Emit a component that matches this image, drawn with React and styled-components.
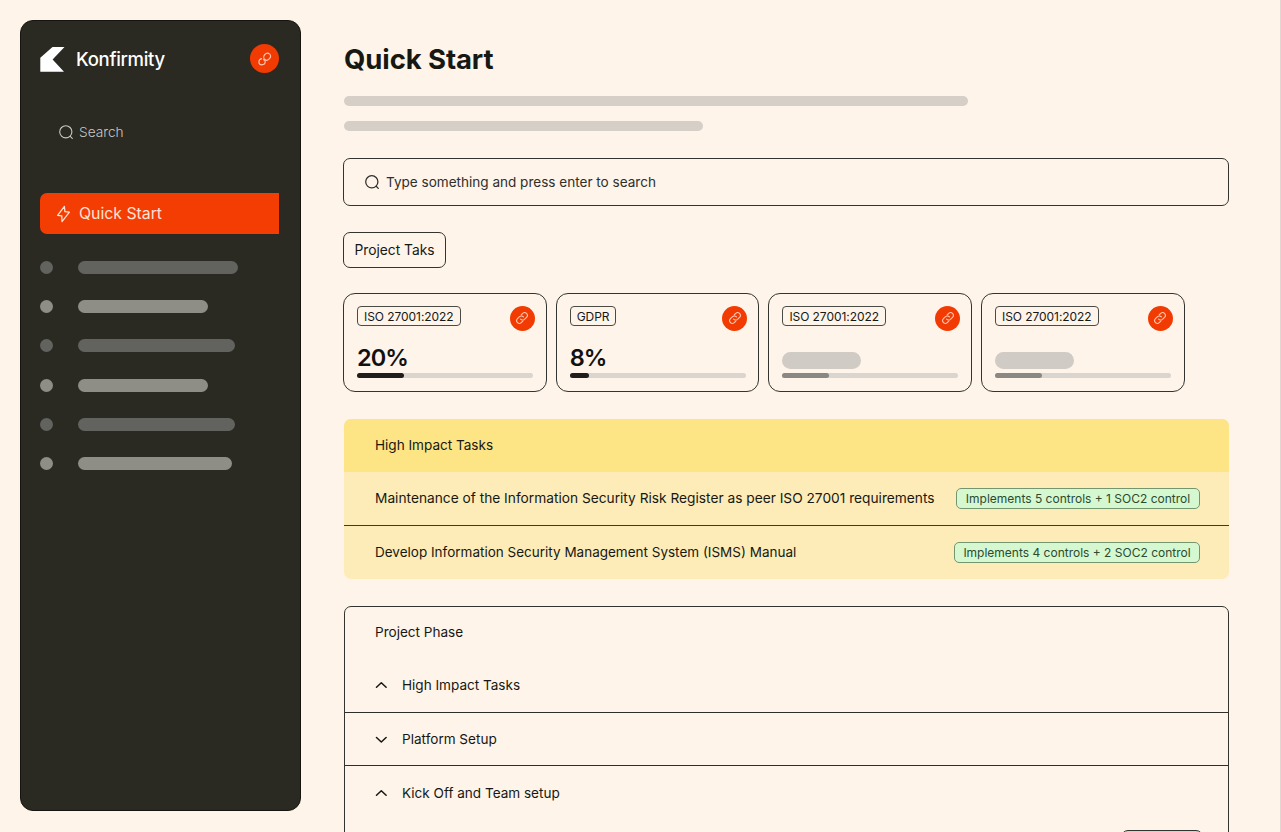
import React from 'react'
import styled, { createGlobalStyle } from 'styled-components'

const navItems = [
  { width: 160, dim: true },
  { width: 130 },
  { width: 157, dim: true },
  { width: 130 },
  { width: 157, dim: true },
  { width: 154 }
]

const projects = [
  { name: 'ISO 27001:2022', percent: '20%', done: 47 },
  { name: 'GDPR', percent: '8%', done: 19 },
  { name: 'ISO 27001:2022', done: 47 },
  { name: 'ISO 27001:2022', done: 47 }
]

const phases = [
  { name: 'High Impact Tasks', open: true },
  { name: 'Platform Setup' },
  { name: 'Kick Off and Team setup', open: true }
]

const SearchIcon = ({ size = 16, weight = 1.2 }) => (
  <svg width={size} height={size} viewBox='0 0 16 16' fill='none' stroke='currentColor' strokeWidth={weight} strokeLinecap='round'>
    <circle cx='7.8' cy='7.8' r='6.1' />
    <path d='M12.2 12.3L14.3 14.4' />
  </svg>
)

const BoltIcon = () => (
  <svg width='16' height='18' viewBox='0 0 16 18' fill='none' stroke='currentColor' strokeWidth='1.25' strokeLinejoin='round'>
    <path d='M9.4 1.3L2.6 10.3L6.8 10.8L7 16.6L14.4 7.2L9.9 6.6Z' />
  </svg>
)

const LinkIcon = () => (
  <svg width='14' height='14' viewBox='0 0 14 14' fill='none' stroke='currentColor' strokeWidth='1.1' strokeLinecap='round' strokeLinejoin='round'>
    <g transform='rotate(-45 7 7)'>
      <path d='M5.4 9.7H3.3A2.7 2.7 0 0 1 3.3 4.3H6.2A2.7 2.7 0 0 1 8.8 7.2' />
      <path d='M8.6 4.3H10.7A2.7 2.7 0 0 1 10.7 9.7H7.8A2.7 2.7 0 0 1 5.2 6.8' />
    </g>
  </svg>
)

const BrandLinkIcon = () => (
  <svg width='14' height='14' viewBox='0 0 14 14' fill='none' stroke='currentColor' strokeWidth='1.1' strokeLinecap='round'>
    <ellipse cx='9.1' cy='4.7' rx='3.1' ry='3.6' transform='rotate(40 9.1 4.7)' />
    <path d='M3.6 6.6C2.2 7 0.9 8.3 0.9 10C0.9 11.8 2.2 12.9 3.8 12.9C5.8 12.9 7.2 11.4 7.2 9.6C7.2 8.6 6.4 7.7 5.4 7.6' />
  </svg>
)

const Chevron = ({ open }) => (
  <svg width='12' height='8' viewBox='0 0 12 8' fill='none' stroke='currentColor' strokeWidth='1.5' strokeLinecap='round' strokeLinejoin='round'>
    <path d={open ? 'M1.5 6.3L6.3 1.7L11.1 6.3' : 'M1.5 2.5L6.3 7L11.1 2.5'} />
  </svg>
)

const App = () => (
  <Page>
    <GlobalStyle />
    <Sidebar>
      <Brand>
        <svg width='25' height='26' viewBox='0 0 25 26'>
          <path d='M12.5 1H24.5L12.6 13.5L24 25.7H0.3V11.8Z' fill='#fff' />
        </svg>
        <BrandName>Konfirmity</BrandName>
        <Round $size={29}>
          <BrandLinkIcon />
        </Round>
      </Brand>
      <SideSearch>
        <SearchIcon weight={1.1} />
        <span>Search</span>
      </SideSearch>
      <ActiveItem>
        <BoltIcon />
        <span>Quick Start</span>
      </ActiveItem>
      <NavList>
        {navItems.map((item, i) => (
          <NavItem key={i} $dim={item.dim}>
            <Dot />
            <NavBar $width={item.width} />
          </NavItem>
        ))}
      </NavList>
    </Sidebar>

    <Main>
      <Title>Quick Start</Title>
      <Line $width={624} />
      <Line $width={359} />
      <SearchBox>
        <SearchIcon weight={1.25} />
        <span>Type something and press enter to search</span>
      </SearchBox>
      <Tab>Project Taks</Tab>

      <Cards>
        {projects.map((project, i) => (
          <Card key={i}>
            <CardTop>
              <Tag>{project.name}</Tag>
              <Round $size={25}>
                <LinkIcon />
              </Round>
            </CardTop>
            {project.percent ? <Percent>{project.percent}</Percent> : <Placeholder />}
            <Track>
              <Progress $muted={!project.percent} style={{ width: project.done }} />
            </Track>
          </Card>
        ))}
      </Cards>

      <Impact>
        <ImpactHead>High Impact Tasks</ImpactHead>
        <ImpactRow $divider>
          <TaskName $size={13.72}>Maintenance of the Information Security Risk Register as peer ISO 27001 requirements</TaskName>
          <Badge $width={244}>Implements 5 controls + 1 SOC2 control</Badge>
        </ImpactRow>
        <ImpactRow>
          <TaskName $size={13.5}>Develop Information Security Management System (ISMS) Manual</TaskName>
          <Badge $width={246}>Implements 4 controls + 2 SOC2 control</Badge>
        </ImpactRow>
      </Impact>

      <Phases>
        <PhaseHead>Project Phase</PhaseHead>
        {phases.map(phase => (
          <PhaseRow key={phase.name}>
            <Chevron open={phase.open} />
            <span>{phase.name}</span>
          </PhaseRow>
        ))}
        <PhaseButton />
      </Phases>
    </Main>
  </Page>
)

const GlobalStyle = createGlobalStyle`
  * {
    box-sizing: border-box;
  }
  body {
    margin: 0;
    background: #fef4ea;
    overflow: hidden;
  }
  svg {
    display: block;
    flex: none;
  }
`
const Page = styled.div`
  display: flex;
  gap: 42px;
  width: 1281px;
  height: 832px;
  padding: 20px 0 0 20px;
  overflow: hidden;
  border-right: 1px solid #dfd7d0;
  background: #fef4ea;
  color: #161814;
  font-family: Inter, 'Liberation Sans', sans-serif;
  font-size: 13.55px;
  white-space: nowrap;
`
const Sidebar = styled.aside`
  flex: none;
  width: 281px;
  height: 791px;
  padding: 23px 21px 0 19px;
  border: 1px solid #14150f;
  border-radius: 13px;
  background: #2a2922;
`
const Brand = styled.div`
  display: flex;
  align-items: center;
  height: 29px;
`
const BrandName = styled.div`
  flex: 1;
  margin-left: 11px;
  color: #fff;
  font-size: 18.5px;
  font-weight: 500;
  letter-spacing: -0.3px;
`
const Round = styled.div`
  flex: none;
  display: flex;
  align-items: center;
  justify-content: center;
  width: ${p => p.$size}px;
  height: ${p => p.$size}px;
  border-radius: 50%;
  background: #f23b02;
  color: #ffc9b3;
`
const SideSearch = styled.div`
  display: flex;
  align-items: center;
  gap: 5px;
  height: 20px;
  margin: 49px 0 0 18px;
  color: #c9c8c2;
  font-size: 13.7px;
  font-weight: 300;
`
const ActiveItem = styled.div`
  display: flex;
  align-items: center;
  gap: 8px;
  height: 41px;
  margin-top: 51px;
  padding-left: 15px;
  border-radius: 7px 0 0 7px;
  background: #f43d02;
  color: #ffe3d6;
  font-size: 15.8px;
`
const NavList = styled.div`
  display: flex;
  flex-direction: column;
  gap: 26.4px;
  margin-top: 26.5px;
`
const Dot = styled.div`
  width: 13px;
  height: 13px;
  border-radius: 50%;
`
const NavBar = styled.div`
  width: ${p => p.$width}px;
  height: 13px;
  border-radius: 7px;
`
const NavItem = styled.div`
  display: flex;
  gap: 24.5px;

  ${Dot}, ${NavBar} {
    background: ${p => (p.$dim ? '#62635f' : '#8e8e87')};
  }
`
const Main = styled.main`
  display: flex;
  flex-direction: column;
  align-items: flex-start;
  width: 886px;
`
const Title = styled.h1`
  margin: 22px 0 19px 1px;
  font-size: 27.5px;
  font-weight: 700;
  line-height: 35px;
  letter-spacing: -0.1px;
`
const Line = styled.div`
  flex: none;
  width: ${p => p.$width}px;
  height: 10px;
  margin: 0 0 15.4px 1px;
  border-radius: 5px;
  background: #d5cfc8;
`
const SearchBox = styled.div`
  flex: none;
  display: flex;
  align-items: center;
  gap: 6px;
  width: 886px;
  height: 48px;
  margin-top: 11.2px;
  padding-left: 20px;
  border: 1px solid #33342f;
  border-radius: 7px;
  color: #2e2f2b;
`
const Tab = styled.div`
  flex: none;
  width: 103px;
  height: 36px;
  margin-top: 26px;
  border: 1px solid #33342f;
  border-radius: 7px;
  font-size: 13.8px;
  line-height: 34px;
  text-align: center;
`
const Cards = styled.div`
  flex: none;
  display: grid;
  grid-template-columns: repeat(4, 203.7px);
  gap: 9px;
  margin-top: 25px;
`
const Card = styled.div`
  height: 99px;
  padding: 12px 11px 0 13px;
  border: 1px solid #33342f;
  border-radius: 12px;
`
const CardTop = styled.div`
  display: flex;
  justify-content: space-between;
  height: 34px;
`
const Tag = styled.div`
  height: 20px;
  padding: 0 6px;
  border: 1px solid #4a4b45;
  border-radius: 4px;
  font-size: 12px;
  line-height: 19px;
  letter-spacing: -0.06px;
`
const Percent = styled.div`
  height: 33px;
  font-size: 23.5px;
  font-weight: 600;
  line-height: 36px;
  letter-spacing: -0.9px;
  color: #111;
`
const Placeholder = styled.div`
  width: 79px;
  height: 17px;
  margin: 12px 0 4px;
  border-radius: 9px;
  background: #d0cbc5;
`
const Track = styled.div`
  width: 176px;
  height: 5px;
  border-radius: 3px;
  background: #dad5cf;
`
const Progress = styled.div`
  height: 5px;
  border-radius: 3px;
  background: ${p => (p.$muted ? '#8b8782' : '#1f1e1c')};
`
const Impact = styled.section`
  flex: none;
  width: 885px;
  margin: 27px 0 0 1px;
  overflow: hidden;
  border-radius: 7px;
  background: #fdecb8;
`
const ImpactHead = styled.div`
  height: 53px;
  padding-left: 31px;
  background: #fde484;
  line-height: 53px;
`
const ImpactRow = styled.div`
  display: flex;
  align-items: center;
  justify-content: space-between;
  height: ${p => (p.$divider ? '54px' : '53px')};
  padding: 0 29px 0 31px;
  border-bottom: ${p => (p.$divider ? '1px solid #3c3b2b' : 'none')};
`
const TaskName = styled.div`
  font-size: ${p => p.$size}px;
  line-height: 18px;
`
const Badge = styled.div`
  width: ${p => p.$width}px;
  height: 21px;
  border: 1px solid #73966f;
  border-radius: 5px;
  background: #d5f8d0;
  color: #2c4a30;
  font-size: 12px;
  line-height: 19px;
  text-align: center;
`
const Phases = styled.section`
  flex: none;
  display: flex;
  flex-direction: column;
  width: 885px;
  height: 260px;
  margin: 27px 0 0 1px;
  border: 1px solid #33342f;
  border-radius: 7px;
`
const PhaseHead = styled.div`
  flex: none;
  height: 52px;
  padding-left: 30px;
  line-height: 51px;
`
const PhaseRow = styled.div`
  flex: none;
  display: flex;
  align-items: center;
  gap: 15px;
  height: 53.5px;
  padding-left: 30px;
  border-bottom: 1px solid #2e2f2a;

  &:nth-child(2) {
    height: 54px;
  }
  &:nth-last-child(2) {
    border-bottom: none;
  }
`
const PhaseButton = styled.div`
  flex: none;
  align-self: flex-end;
  width: 82px;
  height: 36px;
  margin: 10px 25px 0 0;
  border: 1px solid #33342f;
  border-radius: 7px;
  background: #d2d6be;
`

export default App
